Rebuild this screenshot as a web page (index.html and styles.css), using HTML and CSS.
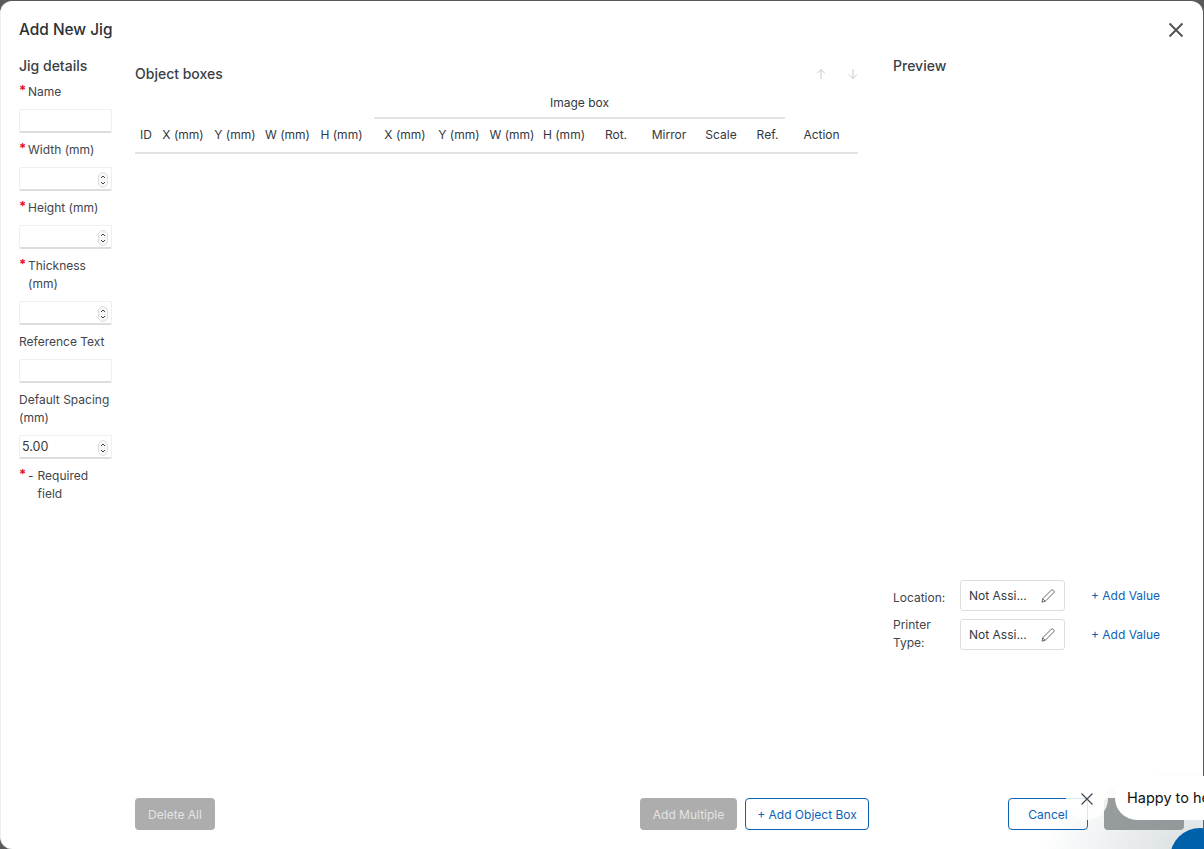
FILE: index.html
```html
<!DOCTYPE html>
<html lang="en">
<head>
<meta charset="utf-8">
<title>Add New Jig</title>
<link rel="stylesheet" href="styles.css">
</head>
<body>
<div class="modal">
  <header class="modal-head">
    <h1 class="modal-title">Add New Jig</h1>
    <button class="close-btn" aria-label="Close">
      <svg viewBox="0 0 16 16" width="16" height="16"><path d="M1.500 1.500l13 13M14.500 1.500l-13 13" fill="none" stroke="#555" stroke-width="2"/></svg>
    </button>
  </header>
  <div class="modal-body">
    <aside class="details">
      <h2 class="section-title">Jig details</h2>
      <form class="fields">
        <div class="field"><label class="label req">Name</label><input class="input" type="text"></div>
        <div class="field"><label class="label req">Width (mm)</label><div class="num"><input class="input" type="text"><svg class="spin" viewBox="0 0 10 16"><rect x="0.500" y="0.500" width="9" height="15" rx="4.500" fill="#f7f7f7" stroke="#dedede"/><path d="M3 6l2-2 2 2M3 10l2 2 2-2" fill="none" stroke="#444" stroke-width="1"/></svg></div></div>
        <div class="field"><label class="label req">Height (mm)</label><div class="num"><input class="input" type="text"><svg class="spin" viewBox="0 0 10 16"><rect x="0.500" y="0.500" width="9" height="15" rx="4.500" fill="#f7f7f7" stroke="#dedede"/><path d="M3 6l2-2 2 2M3 10l2 2 2-2" fill="none" stroke="#444" stroke-width="1"/></svg></div></div>
        <div class="field"><label class="label req">Thickness (mm)</label><div class="num"><input class="input" type="text"><svg class="spin" viewBox="0 0 10 16"><rect x="0.500" y="0.500" width="9" height="15" rx="4.500" fill="#f7f7f7" stroke="#dedede"/><path d="M3 6l2-2 2 2M3 10l2 2 2-2" fill="none" stroke="#444" stroke-width="1"/></svg></div></div>
        <div class="field"><label class="label">Reference Text</label><input class="input" type="text"></div>
        <div class="field"><label class="label">Default Spacing (mm)</label><div class="num"><input class="input" type="text" value="5.00"><svg class="spin" viewBox="0 0 10 16"><rect x="0.500" y="0.500" width="9" height="15" rx="4.500" fill="#f7f7f7" stroke="#dedede"/><path d="M3 6l2-2 2 2M3 10l2 2 2-2" fill="none" stroke="#444" stroke-width="1"/></svg></div></div>
        <p class="label req req-note"><span class="dash">-</span><span>Required field</span></p>
      </form>
    </aside>
    <section class="boxes">
      <div class="boxes-head">
        <h2 class="section-title">Object boxes</h2>
        <div class="arrows">
          <svg viewBox="0 0 12 12" width="12" height="12"><path d="M6 11V1.500M2 5.500l4-4 4 4" fill="none" stroke="#c8c8c8" stroke-width="1"/></svg>
          <svg viewBox="0 0 12 12" width="12" height="12"><path d="M6 1v9.500M2 6.500l4 4 4-4" fill="none" stroke="#c8c8c8" stroke-width="1"/></svg>
        </div>
      </div>
      <table class="grid">
        <colgroup>
          <col class="c22"><col class="c52"><col class="c52"><col class="c53"><col class="c60">
          <col class="c62"><col class="c46"><col class="c60"><col class="c44"><col class="c60"><col class="c46"><col class="c58"><col class="c35"><col class="c73">
        </colgroup>
        <thead>
          <tr class="group-row">
            <th colspan="5"></th>
            <th colspan="9" class="group-wrap"><div class="group-label">Image box</div></th>
          </tr>
          <tr class="col-row">
            <th>ID</th><th>X (mm)</th><th>Y (mm)</th><th>W (mm)</th><th class="pad-r">H (mm)</th>
            <th>X (mm)</th><th>Y (mm)</th><th>W (mm)</th><th>H (mm)</th><th>Rot.</th><th>Mirror</th><th>Scale</th><th>Ref.</th><th>Action</th>
          </tr>
        </thead>
      </table>
      <div class="boxes-foot">
        <button class="btn btn-off btn-delete">Delete All</button>
        <div class="foot-right">
          <button class="btn btn-off btn-multi">Add Multiple</button>
          <button class="btn btn-line btn-add">+ Add Object Box</button>
        </div>
      </div>
    </section>
    <section class="preview">
      <h2 class="section-title">Preview</h2>
      <div class="canvas"></div>
      <div class="assign">
        <span class="assign-label assign-low">Location:</span>
        <div class="picker"><span>Not Assi...</span><svg viewBox="0 0 16 16" width="16" height="16"><path d="M2 14.200l.7-3.400L11.200 2.300a1.500 1.500 0 0 1 2.100 0l.4.4a1.500 1.500 0 0 1 0 2.100L5.200 13.300zM2.700 10.800l2.500 2.500" fill="none" stroke="#666" stroke-width="1"/></svg></div>
        <a class="add-value" href="#">+ Add Value</a>
      </div>
      <div class="assign">
        <span class="assign-label assign-high">Printer Type:</span>
        <div class="picker"><span>Not Assi...</span><svg viewBox="0 0 16 16" width="16" height="16"><path d="M2 14.200l.7-3.400L11.200 2.300a1.500 1.500 0 0 1 2.100 0l.4.4a1.500 1.500 0 0 1 0 2.100L5.200 13.300zM2.700 10.800l2.500 2.500" fill="none" stroke="#666" stroke-width="1"/></svg></div>
        <a class="add-value" href="#">+ Add Value</a>
      </div>
      <div class="preview-foot">
        <button class="btn btn-line btn-cancel">Cancel</button>
        <button class="btn btn-save"></button>
      </div>
    </section>
  </div>
</div>
<div class="chat">
  <button class="chat-close" aria-label="Dismiss">
    <svg viewBox="0 0 14 14" width="14" height="14"><path d="M1.500 1.500l11 11M12.500 1.500l-11 11" fill="none" stroke="#3d4a55" stroke-width="1.200"/></svg>
  </button>
  <div class="chat-bubble">Happy to help</div>
  <div class="chat-fab"></div>
</div>
</body>
</html>
```
FILE: styles.css
```css
* { box-sizing: border-box; }
html, body { height: 100%; }
body {
  margin: 0;
  background: #5a5a5a;
  overflow: hidden;
  font-family: Inter, "Liberation Sans", sans-serif;
  color: #343a40;
  font-size: 12px;
  line-height: 18px;
}
.modal {
  width: 1203px;
  height: 848px;
  margin-top: 1px;
  background: #fff;
  border-radius: 12px;
  border-left: 1px solid #eee;
  overflow: hidden;
  display: flex;
  flex-direction: column;
}
.modal-head {
  height: 56px;
  padding: 17px 19px 0 18px;
  display: flex;
  justify-content: space-between;
  align-items: flex-start;
}
.modal-title { margin: 0; font-size: 15.400px; line-height: 24px; font-weight: 500; color: #2b3036; }
.close-btn {
  border: 0; background: none; padding: 0;
  margin: 4px 0 0;
  width: 16px; height: 16px;
}
.close-btn svg { display: block; }
.modal-body {
  flex: 1;
  min-height: 0;
  padding: 0 20px 19px 18px;
  display: grid;
  grid-template-columns: 93px 734px 1fr;
  column-gap: 23px;
}
.section-title { margin: 0; font-size: 14px; line-height: 18px; font-weight: 500; color: #3a4046; }
.details .section-title { height: 18px; margin-bottom: 8px; }
.fields { display: flex; flex-direction: column; gap: 8px; }
.field { display: flex; flex-direction: column; gap: 8px; }
.label { display: block; margin: 0; color: #3f454b; }
.req { position: relative; padding-left: 9px; }
.req::before {
  content: "*";
  position: absolute;
  left: 0; top: -2px;
  color: #e8112d;
  font-weight: 700;
  font-size: 13px;
}
.req-note { display: flex; gap: 4px; }
.input {
  display: block;
  width: 93px;
  height: 24px;
  border: 1px solid #efefef;
  border-bottom: 2px solid #ddd;
  border-radius: 2px;
  background: #fff;
  padding: 0 2px;
  font: inherit;
  font-size: 12.500px;
  color: #343a40;
  outline: none;
}
.num { position: relative; }
.spin { position: absolute; right: 4px; top: 5px; width: 10px; height: 16px; }
.boxes { display: flex; flex-direction: column; min-height: 0; }
.boxes-head {
  width: 723px;
  height: 18px;
  margin-top: 8px;
  display: flex;
  justify-content: space-between;
  align-items: center;
}
.arrows { display: flex; gap: 20px; margin-right: -1px; }
.arrows svg { display: block; }
.grid { width: 723px; table-layout: fixed; border-collapse: collapse; margin-top: 5px; }
.grid th { padding: 0; font-weight: 400; font-size: 12px; text-align: center; color: #32383e; white-space: nowrap; }
.c22 { width: 22px; } .c35 { width: 35px; } .c44 { width: 44px; } .c46 { width: 46px; }
.c52 { width: 52px; } .c53 { width: 53px; } .c58 { width: 58px; } .c60 { width: 60px; }
.c62 { width: 62px; } .c73 { width: 73px; }
.group-row th { height: 31px; }
.group-wrap { vertical-align: top; }
.group-label { width: 411px; height: 31px; padding-top: 6px; border-bottom: 2px solid #e4e4e4; }
.col-row th { height: 34px; border-bottom: 2px solid #e4e4e4; padding-bottom: 1px; }
.col-row .pad-r { padding-right: 5px; }
.boxes-foot { margin-top: auto; display: flex; justify-content: space-between; }
.foot-right { display: flex; gap: 8px; }
.btn {
  height: 32px;
  border-radius: 4px;
  font: inherit;
  padding: 1px 0 0;
  display: block;
}
.btn-off { background: #adadad; border: 0; color: #e4e4e4; }
.btn-line { background: #fff; border: 1px solid #0b63b6; color: #0b63b6; }
.btn-delete { width: 80px; }
.btn-multi { width: 97px; }
.btn-add { width: 124px; }
.preview { display: flex; flex-direction: column; min-height: 0; padding-left: 1px; }
.canvas { height: 505px; }
.assign { display: flex; align-items: center; margin-bottom: 8px; height: 31px; }
.assign-label { width: 67px; color: #3f454b; }
.assign-low { padding-top: 4px; }
.assign-high { padding-bottom: 1px; }
.picker {
  width: 105px;
  height: 31px;
  border: 1px solid #ddd;
  border-radius: 3px;
  padding: 1px 8px 0;
  display: flex;
  align-items: center;
  justify-content: space-between;
}
.picker svg { display: block; }
.add-value { margin-left: 26px; color: #0b63b6; text-decoration: none; margin-top: 0; }
.preview-foot { margin-top: auto; display: flex; gap: 16px; padding-left: 115px; }
.btn-cancel { width: 80px; }
.btn-save { width: 80px; background: #9a9d9d; border: 0; }
.chat {
  position: fixed;
  right: 0; bottom: 0;
  width: 220px; height: 110px;
  background: radial-gradient(ellipse 165px 80px at 100% 100%, rgba(120,140,150,.3), rgba(120,140,150,0));
  pointer-events: none;
}
.chat-close {
  position: absolute;
  left: 82px; top: 39px;
  width: 42px; height: 42px;
  border: 0; border-radius: 50%;
  background: rgba(255,255,255,.85);
  padding: 14px;
}
.chat-close svg { display: block; }
.chat-bubble {
  position: absolute;
  left: 131px; top: 37px;
  width: 120px; height: 44px;
  padding: 12px;
  background: #fff;
  border-radius: 22px;
  font-size: 14.500px;
  line-height: 20px;
  color: #111;
  white-space: nowrap;
}
.chat-fab {
  position: absolute;
  left: 186px; top: 89px;
  width: 60px; height: 60px;
  border-radius: 50%;
  background: #0060a9;
}
```
